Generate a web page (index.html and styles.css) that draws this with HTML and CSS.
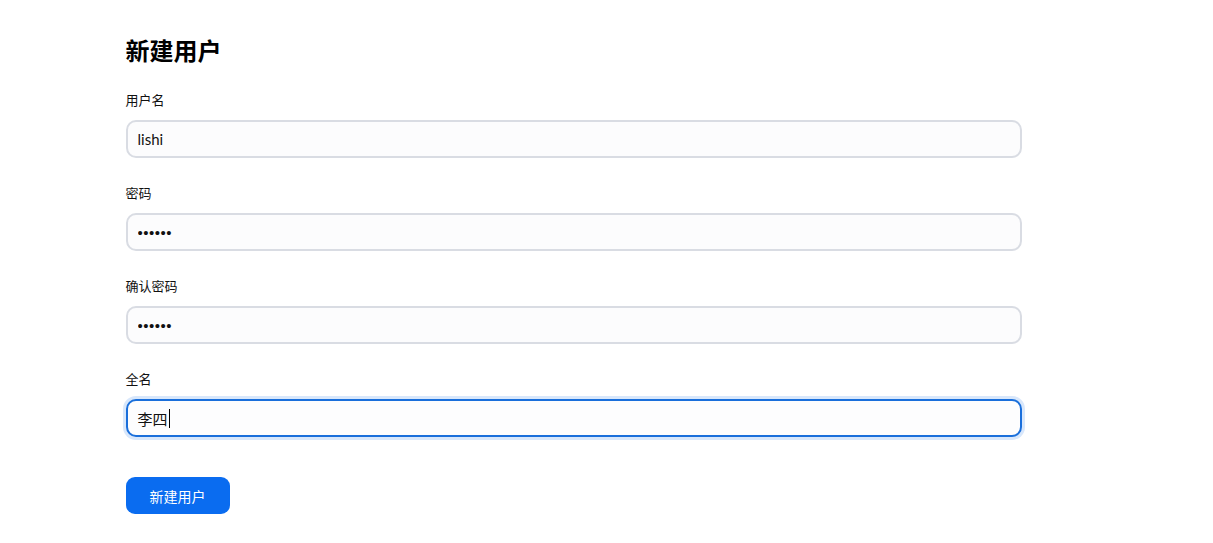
FILE: index.html
```html
<!DOCTYPE html>
<html lang="zh-CN">
<head>
<meta charset="utf-8">
<title>新建用户</title>
<link rel="stylesheet" href="styles.css">
</head>
<body>
<main class="page">
  <h1 class="title">新建用户</h1>
  <form class="form">
    <div class="field">
      <label class="label" for="u">用户名</label>
      <input class="input" id="u" type="text" value="lishi">
    </div>
    <div class="field">
      <label class="label" for="p">密码</label>
      <input class="input input-pass" id="p" type="password" value="123456">
    </div>
    <div class="field">
      <label class="label" for="p2">确认密码</label>
      <input class="input input-pass" id="p2" type="password" value="123456">
    </div>
    <div class="field">
      <label class="label" for="n">全名</label>
      <div class="input input-focus">李四<span class="caret"></span></div>
    </div>
    <button class="btn" type="button">新建用户</button>
  </form>
</main>
</body>
</html>
```
FILE: styles.css
```css
html, body {
  margin: 0;
  padding: 0;
  background: #ffffff;
}
body {
  font-family: Lato, "Noto Sans CJK SC", sans-serif;
  color: #111;
}
.page {
  max-width: 1024px;
  margin: 0 auto;
  padding: 35px 33px 0 31px;
  box-sizing: border-box;
}
.title {
  font-size: 24px;
  line-height: 32px;
  font-weight: 700;
  margin: 0 0 23px;
  color: #000;
}
.form {
  display: flex;
  flex-direction: column;
  max-width: 896px;
}
.field {
  display: flex;
  flex-direction: column;
  margin-bottom: 25px;
}
.label {
  font-size: 13px;
  line-height: 20px;
  margin-bottom: 10px;
  color: #111;
}
.input {
  box-sizing: border-box;
  height: 38px;
  width: 100%;
  border: 2px solid #d9dce3;
  border-radius: 10px;
  background: #fcfcfd;
  padding: 0 10px;
  font-family: Lato, "Noto Sans CJK SC", sans-serif;
  font-size: 15px;
  color: #111;
  outline: none;
  display: flex;
  align-items: center;
}
.input-pass {
  font-family: "Liberation Sans", sans-serif;
  font-size: 15px;
  letter-spacing: 0.5px;
}
.input-focus {
  border-color: #1a6fdb;
  box-shadow: 0 0 0 3px #d8e7fb;
  background: #fdfdfe;
}
.caret {
  display: inline-block;
  width: 1px;
  height: 19px;
  background: #000;
  margin-left: 1px;
}
.btn {
  align-self: flex-start;
  margin-top: 15px;
  width: 104px;
  height: 37px;
  border: none;
  border-radius: 9px;
  background: #0a6cf0;
  color: #fff;
  font-family: Lato, "Noto Sans CJK SC", sans-serif;
  font-size: 14px;
  cursor: pointer;
}
```
